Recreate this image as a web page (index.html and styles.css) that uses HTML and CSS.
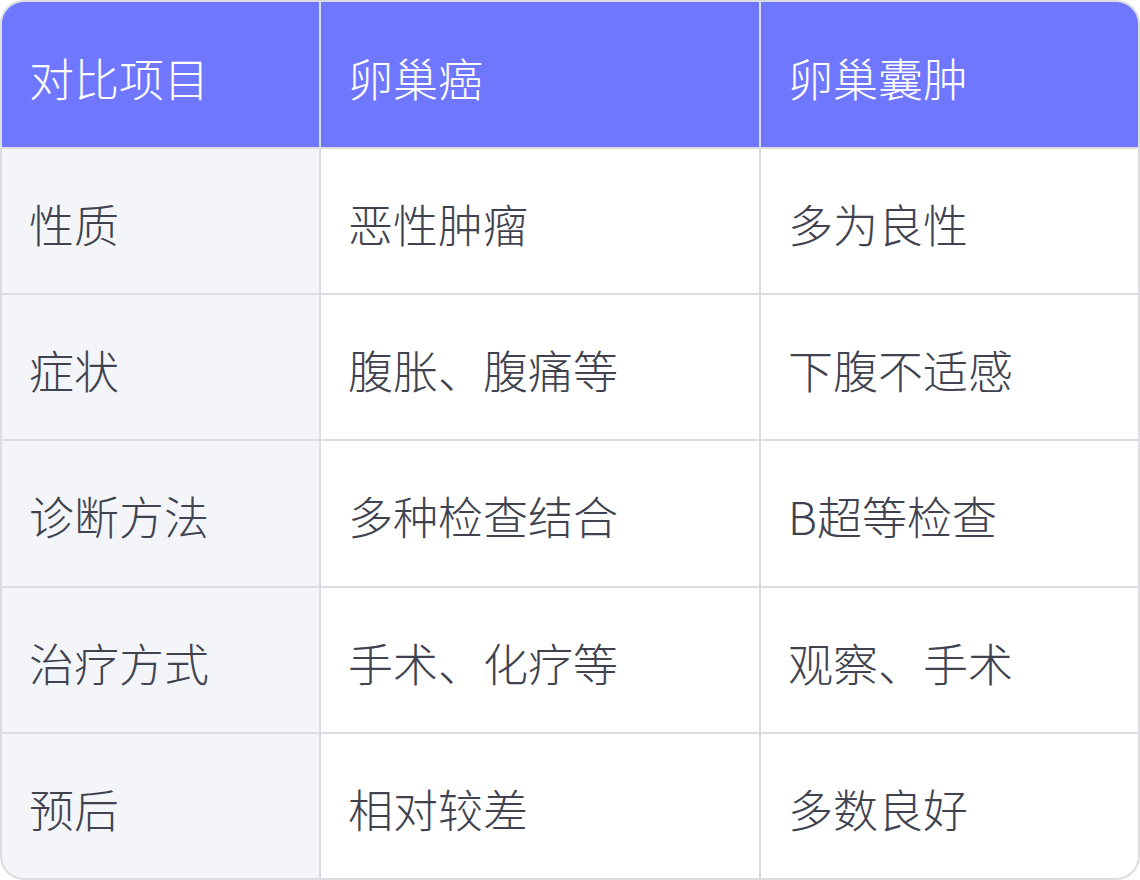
FILE: index.html
```html
<!DOCTYPE html>
<html lang="zh-CN">
<head>
<meta charset="utf-8">
<link rel="stylesheet" href="styles.css">
</head>
<body>
<div class="table">
  <div class="cell head">对比项目</div>
  <div class="cell head">卵巢癌</div>
  <div class="cell head">卵巢囊肿</div>

  <div class="cell label">性质</div>
  <div class="cell">恶性肿瘤</div>
  <div class="cell">多为良性</div>

  <div class="cell label">症状</div>
  <div class="cell">腹胀、腹痛等</div>
  <div class="cell">下腹不适感</div>

  <div class="cell label">诊断方法</div>
  <div class="cell">多种检查结合</div>
  <div class="cell">B超等检查</div>

  <div class="cell label">治疗方式</div>
  <div class="cell">手术、化疗等</div>
  <div class="cell">观察、手术</div>

  <div class="cell label">预后</div>
  <div class="cell">相对较差</div>
  <div class="cell">多数良好</div>
</div>
</body>
</html>
```

FILE: styles.css
```css
html, body {
  margin: 0;
  padding: 0;
  background: #ffffff;
}

.table {
  box-sizing: border-box;
  width: 1140px;
  height: 880px;
  border: 2px solid #dcdde2;
  border-radius: 24px;
  overflow: hidden;
  display: grid;
  grid-template-columns: 317px 438px 1fr;
  grid-template-rows: 145px repeat(5, 1fr);
  gap: 2px;
  background: #dcdde2;
  font-family: "Noto Sans CJK SC", "Noto Sans", sans-serif;
  font-weight: 300;
  font-size: 45px;
  color: #40434f;
}

.cell {
  display: flex;
  align-items: center;
  padding-left: 27px;
  padding-top: 5px;
  background: #ffffff;
  white-space: nowrap;
}

.cell.head {
  background: #7077ff;
  color: #ffffff;
}

.cell.label {
  background: #f4f5f9;
}
```
